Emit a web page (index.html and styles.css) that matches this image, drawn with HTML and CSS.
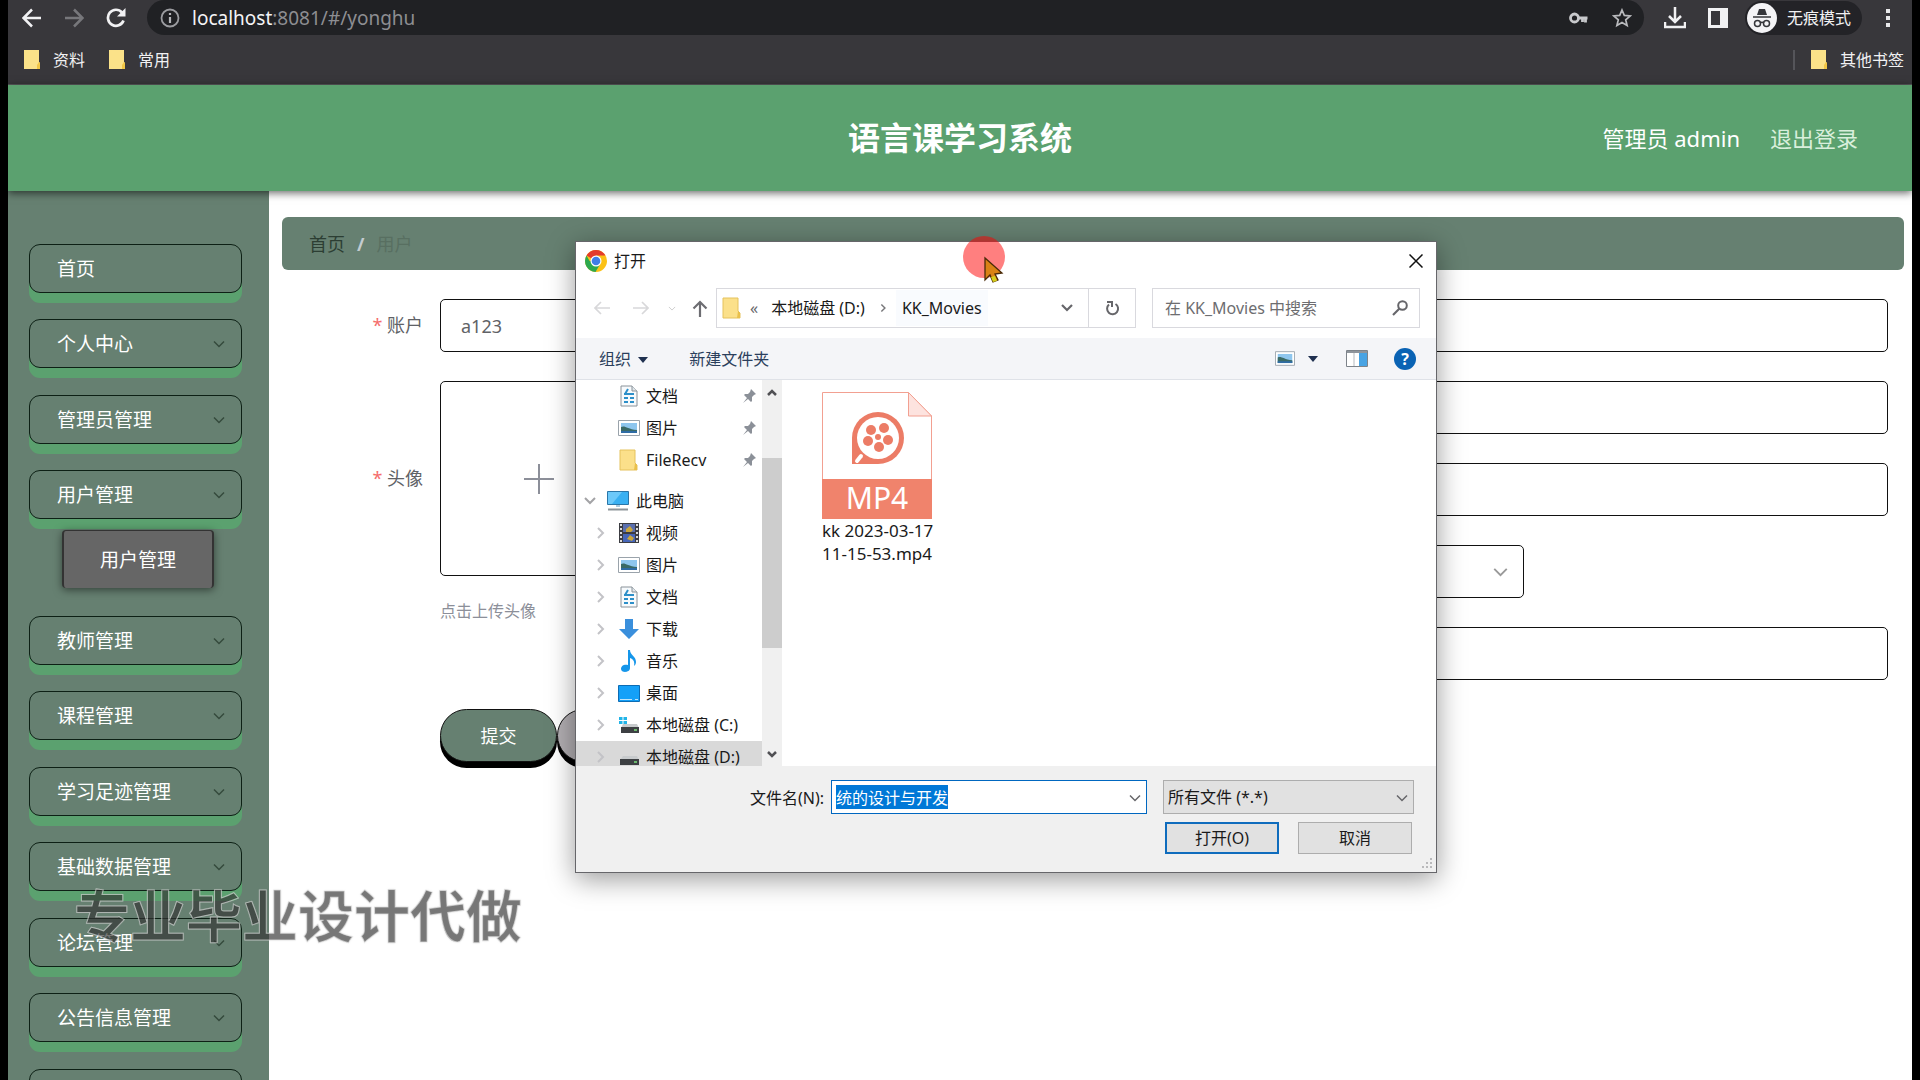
FILE: index.html
```html
<!DOCTYPE html>
<html lang="zh-CN">

<head>
    <meta charset="UTF-8">
    <meta name="viewport" content="width=device-width, initial-scale=1.0">
    <title>语言课学习系统</title>
    <link rel="stylesheet" href="styles.css">
</head>

<body>

    <!-- shared icons -->
    <svg class="sprite" aria-hidden="true">
        <symbol id="i-down" viewBox="0 0 12 8"><path d="M1 1.5l5 5 5-5" fill="none" stroke="currentColor" stroke-width="1.5"/></symbol>
        <symbol id="i-right" viewBox="0 0 8 14"><path d="M1 2l5 5-5 5" fill="none" stroke="currentColor" stroke-width="2"/></symbol>
        <symbol id="i-bookmark" viewBox="0 0 18 20"><path d="M1 0h15v12l1 1v6H1z" fill="#fbe289"/><path d="M14 19v-4l2-3 1 1v6z" fill="#f1c645"/></symbol>
        <symbol id="i-folder" viewBox="0 0 20 22"><path d="M1 1h15v13l2 2v5H1z" fill="#fbe08a" stroke="#e5c25d"/><path d="M15 21l1-7 2 2v5z" fill="#e9c04c"/></symbol>
        <symbol id="i-doc" viewBox="0 0 20 22"><path d="M2 1h11l5 5v15H2z" fill="#f7fafc" stroke="#8a9299"/><path d="M13 1v5h5" fill="#dfe6ea" stroke="#8a9299"/><path d="M9 4l-3 5M5 9h10M5 13h4M11 13h4M5 17h4M11 17h4" stroke="#2c8fc9" stroke-width="2"/></symbol>
        <symbol id="i-pic" viewBox="0 0 22 16"><path d="M.5.5h21v15H.5z" fill="#fff" stroke="#9aa3ab"/><path d="M3 3h16v10H3z" fill="#8ec6ee"/><path d="M3 7c4-2 6 2 16 3v3H3z" fill="#3a6a66"/><path d="M3 11h16v2H3z" fill="#2f6ca5"/></symbol>
        <symbol id="i-pin" viewBox="0 0 14 14"><path d="M9 0l5 5-2 1-2 2v4l-1 1-3-3-5 4 4-5-3-3 1-1h3l2-2z" fill="#8b9098"/></symbol>
        <symbol id="i-pc" viewBox="0 0 22 20"><path d="M.5.5h21v13H.5z" fill="#39b0f2" stroke="#2a76a8"/><path d="M1 1h14L5 13H1z" fill="#6cc9fa"/><path d="M9 14h4v2H9z" fill="#a9cbe0"/><path d="M1 18.5h20" stroke="#8d9499" stroke-width="2"/></symbol>
        <symbol id="i-video" viewBox="0 0 20 20"><path d="M0 0h20v20H0z" fill="#3c3d42"/><path d="M4 1h12v8H4z" fill="#5a6fae"/><path d="M4 11h12v8H4z" fill="#4666b8"/><path d="M7 6l4-3 3 4-2 2H7zM8 16l3-4 4 3-2 3z" fill="#c9a63c"/><path d="M2 1v18M18 1v18" stroke="#dcdcdc" stroke-width="2" stroke-dasharray="2 2"/></symbol>
        <symbol id="i-load" viewBox="0 0 20 20"><path d="M6 0h8v10h6L10 20 0 10h6z" fill="#3a8fdc"/></symbol>
        <symbol id="i-music" viewBox="0 0 16 22"><path d="M7 0h2c0 5 6 6 6 12 0 2-1 3-2 4 1-5-1-7-4-8v10c0 5-9 5-9 1 0-4 4-5 7-4z" fill="#1596ea"/></symbol>
        <symbol id="i-desk" viewBox="0 0 22 17"><path d="M.5.5h21v16H.5z" fill="#14a0f8" stroke="#0c6cb4"/><path d="M2 14.5h12M17 14.5h3" stroke="#bfe4fb"/></symbol>
        <symbol id="i-disk" viewBox="0 0 20 18"><path d="M4 8h14l2 4H1z" fill="#c8cbcd"/><path d="M1 11h19v6H1z" fill="#3d4043"/><path d="M15 14h3" stroke="#7be07b" stroke-width="1.5"/></symbol>
        <symbol id="i-sysdisk" viewBox="0 0 20 18"><path d="M4 8h14l2 4H2z" fill="#c8cbcd"/><path d="M2 11h18v6H2z" fill="#3d4043"/><path d="M15 14h3" stroke="#7be07b" stroke-width="1.5"/><path d="M0 1h3.500v3H0zM4.500 1H8v3H4.500zM0 5h3.500v3H0zM4.500 5H8v3H4.500z" fill="#21b4e8"/></symbol>
    </svg>

    <header class="browser">
        <div class="browser-nav">
            <button class="nav-btn" aria-label="后退"><svg width="20" height="20" viewBox="0 0 20 20"><path d="M19 10H2M10 1.5L1.5 10l8.500 8.500" fill="none" stroke="#f1f1f3" stroke-width="2.5"/></svg></button>
            <button class="nav-btn" aria-label="前进"><svg width="20" height="20" viewBox="0 0 20 20"><path d="M1 10h17M10 1.5l8.500 8.500-8.500 8.500" fill="none" stroke="#77777b" stroke-width="2.5"/></svg></button>
            <button class="nav-btn" aria-label="刷新"><svg width="20" height="20" viewBox="0 0 20 20"><path d="M17.500 12.500A8 8 0 1 1 16 4.500" fill="none" stroke="#f1f1f3" stroke-width="2.7"/><path d="M19.500 0v8.500H11z" fill="#f1f1f3"/></svg></button>
            <div class="url-bar">
                <svg width="20" height="20" viewBox="0 0 20 20"><circle cx="10" cy="10" r="8.5" fill="none" stroke="#9b9ca0" stroke-width="1.8"/><path d="M10 9v6M10 5v2" stroke="#b5b6ba" stroke-width="2.2"/></svg>
                <span class="url"><b>localhost</b>:8081/#/yonghu</span>
                <svg width="19" height="12" viewBox="0 0 19 12"><circle cx="5.5" cy="6" r="4" fill="none" stroke="#c8c9cc" stroke-width="2.8"/><path d="M9 6h9.500M16.500 6v4.500M13.500 6v4" stroke="#c8c9cc" stroke-width="2.8"/></svg>
                <svg width="20" height="20" viewBox="0 0 20 20"><path d="M10 2l2.300 5.400 5.900.5-4.500 3.900 1.400 5.700-5.100-3-5.100 3 1.400-5.700L1.800 7.900l5.900-.5z" fill="none" stroke="#b9babd" stroke-width="1.7"/></svg>
            </div>
            <button class="tool-btn" aria-label="下载"><svg width="22" height="22" viewBox="0 0 22 22"><path d="M11 0v14M5 9l6 6 6-6M1 15v5h20v-5" fill="none" stroke="#f1f1f3" stroke-width="2.5"/></svg></button>
            <button class="tool-btn" aria-label="侧边栏"><svg width="20" height="20" viewBox="0 0 20 20"><path d="M0 0h20v20H0zM3 3v14h9V3z" fill="#f1f1f3" fill-rule="evenodd"/></svg></button>
            <div class="incognito">
                <svg width="30" height="30" viewBox="0 0 30 30"><circle cx="15" cy="15" r="15" fill="#f4f4f6"/><path d="M10 12l2-6h6l2 6z" fill="#35363a"/><path d="M6 14h18M13 20q2-1.500 4 0" fill="none" stroke="#35363a" stroke-width="1.7"/><circle cx="10.5" cy="20.5" r="3" fill="none" stroke="#35363a" stroke-width="1.5"/><circle cx="19.5" cy="20.5" r="3" fill="none" stroke="#35363a" stroke-width="1.5"/></svg>
                <span>无痕模式</span>
            </div>
            <button class="tool-btn" aria-label="菜单"><svg width="4" height="18" viewBox="0 0 4 18"><path d="M0 0h4v4H0zM0 7h4v4H0zM0 14h4v4H0z" fill="#e8e8ea"/></svg></button>
        </div>
        <nav class="bookmarks">
            <a href="#"><svg width="18" height="20"><use href="#i-bookmark"/></svg>资料</a>
            <a href="#"><svg width="18" height="20"><use href="#i-bookmark"/></svg>常用</a>
            <a href="#" class="other"><svg width="18" height="20"><use href="#i-bookmark"/></svg>其他书签</a>
        </nav>
    </header>

    <div class="app">
        <header class="top">
            <h1>语言课学习系统</h1>
            <div class="user">
                <span>管理员 admin</span>
                <a href="#">退出登录</a>
            </div>
        </header>

        <div class="main">
            <aside class="sidebar">
                <ul class="menu">
                    <li><button class="menu-item">首页</button></li>
                    <li><button class="menu-item">个人中心<svg width="12" height="8"><use href="#i-down"/></svg></button></li>
                    <li><button class="menu-item">管理员管理<svg width="12" height="8"><use href="#i-down"/></svg></button></li>
                    <li>
                        <button class="menu-item">用户管理<svg width="12" height="8"><use href="#i-down"/></svg></button>
                        <a href="#/yonghu" class="submenu-item">用户管理</a>
                    </li>
                    <li><button class="menu-item">教师管理<svg width="12" height="8"><use href="#i-down"/></svg></button></li>
                    <li><button class="menu-item">课程管理<svg width="12" height="8"><use href="#i-down"/></svg></button></li>
                    <li><button class="menu-item">学习足迹管理<svg width="12" height="8"><use href="#i-down"/></svg></button></li>
                    <li><button class="menu-item">基础数据管理<svg width="12" height="8"><use href="#i-down"/></svg></button></li>
                    <li><button class="menu-item">论坛管理<svg width="12" height="8"><use href="#i-down"/></svg></button></li>
                    <li><button class="menu-item">公告信息管理<svg width="12" height="8"><use href="#i-down"/></svg></button></li>
                    <li><button class="menu-item" aria-label="更多"></button></li>
                </ul>
            </aside>

            <main class="content">
                <nav class="breadcrumb">
                    <a href="#/">首页</a>
                    <b>/</b>
                    <span>用户</span>
                </nav>

                <form class="user-form">
                    <div class="form-cols">
                        <div class="form-col">
                            <div class="form-item">
                                <label for="account"><i>*</i> 账户</label>
                                <input id="account" class="field" type="text" value="a123">
                            </div>
                            <div class="form-item">
                                <label for="avatar" class="avatar-label"><i>*</i> 头像</label>
                                <div>
                                    <button type="button" id="avatar" class="upload"><svg width="30" height="30" viewBox="0 0 30 30"><path d="M15 0v30M0 15h30" stroke="#8c8f99" stroke-width="2"/></svg></button>
                                    <p class="hint">点击上传头像</p>
                                </div>
                            </div>
                        </div>
                        <div class="form-col">
                            <div class="form-item"><input class="field" type="text" aria-label="姓名"></div>
                            <div class="form-item"><input class="field" type="text" aria-label="手机号"></div>
                            <div class="form-item"><input class="field" type="text" aria-label="身份证号"></div>
                            <div class="form-item">
                                <div class="select-wrap">
                                    <select class="field" aria-label="性别"><option></option></select>
                                    <svg width="15" height="10"><use href="#i-down"/></svg>
                                </div>
                            </div>
                            <div class="form-item"><input class="field" type="text" aria-label="邮箱"></div>
                        </div>
                    </div>
                    <div class="form-actions">
                        <button type="button" class="btn btn-submit">提交</button>
                        <button type="button" class="btn" aria-label="取消"></button>
                    </div>
                </form>
            </main>
        </div>
    </div>

    <section class="dialog" role="dialog" aria-label="打开">
        <div class="dialog-title">
            <svg width="22" height="22" viewBox="0 0 22 22"><circle cx="11" cy="11" r="11" fill="#fbc116"/><path d="M11 11L1.500 5.500A11 11 0 0 1 20.500 5.500H11z" fill="#e33b2e"/><path d="M1.500 5.500A11 11 0 0 0 10.500 22l5-8.500L11 11H4.600z" fill="#2da94f"/><circle cx="11" cy="11" r="5.5" fill="#fff"/><circle cx="11" cy="11" r="4.3" fill="#3f7ee8"/></svg>
            <span>打开</span>
            <button aria-label="关闭"><svg width="14" height="14" viewBox="0 0 14 14"><path d="M.5.5l13 13M13.500.5l-13 13" stroke="#111" stroke-width="1.5"/></svg></button>
        </div>

        <div class="dialog-nav">
            <button class="go" aria-label="后退"><svg width="16" height="14" viewBox="0 0 16 14"><path d="M16 7H1M7 1L1 7l6 6" fill="none" stroke="#d8d8da" stroke-width="1.7"/></svg></button>
            <button class="go" aria-label="前进"><svg width="16" height="14" viewBox="0 0 16 14"><path d="M0 7h15M9 1l6 6-6 6" fill="none" stroke="#d8d8da" stroke-width="1.7"/></svg></button>
            <button class="go go-small" aria-label="最近位置"><svg class="faint" width="8" height="5"><use href="#i-down"/></svg></button>
            <button class="go go-up" aria-label="上移"><svg width="16" height="17" viewBox="0 0 16 17"><path d="M8 17V2M1.500 8.500L8 2l6.500 6.500" fill="none" stroke="#6d6d72" stroke-width="2.2"/></svg></button>
            <div class="address">
                <svg width="20" height="22"><use href="#i-folder"/></svg>
                <span class="laquo">«</span>
                <span>本地磁盘 (D:)</span>
                <svg class="sep" width="7" height="10"><use href="#i-right"/></svg>
                <span class="current">KK_Movies</span>
                <button class="drop" aria-label="历史"><svg width="12" height="8" viewBox="0 0 12 8"><path d="M1 1l5 5 5-5" fill="none" stroke="#66666a" stroke-width="2.2"/></svg></button>
                <button class="refresh" aria-label="刷新"><svg width="15" height="16" viewBox="0 0 15 16"><path d="M10.500 4A5.500 5.500 0 1 1 4 4.500M2 2h5v5" fill="none" stroke="#66666a" stroke-width="2"/></svg></button>
            </div>
            <div class="search">
                <input type="text" placeholder="在 KK_Movies 中搜索" aria-label="搜索">
                <svg width="16" height="16" viewBox="0 0 16 16"><circle cx="10.5" cy="5.5" r="4.3" fill="none" stroke="#66666a" stroke-width="2"/><path d="M7.500 8.500L1 15" stroke="#66666a" stroke-width="2.2"/></svg>
            </div>
        </div>

        <div class="dialog-tools">
            <button>组织 <i class="caret"></i></button>
            <button class="new-folder">新建文件夹</button>
            <button class="views" aria-label="视图"><svg width="20" height="15"><use href="#i-pic"/></svg><i class="caret"></i></button>
            <button class="pane" aria-label="预览窗格"><svg width="22" height="17" viewBox="0 0 22 17"><path d="M.5.5h21v16H.5z" fill="#fff" stroke="#7d838a"/><path d="M1 1h20v2H1z" fill="#8f959c"/><path d="M8 3v13" stroke="#b6babf"/><path d="M13 3h8v13h-8z" fill="#48a3e3"/></svg></button>
            <button class="help" aria-label="帮助">?</button>
        </div>

        <div class="dialog-body">
            <ul class="tree">
                <li><svg width="20" height="22"><use href="#i-doc"/></svg>文档<svg class="pin" width="14" height="14"><use href="#i-pin"/></svg></li>
                <li><svg width="22" height="16"><use href="#i-pic"/></svg>图片<svg class="pin" width="14" height="14"><use href="#i-pin"/></svg></li>
                <li><svg width="20" height="22"><use href="#i-folder"/></svg>FileRecv<svg class="pin" width="14" height="14"><use href="#i-pin"/></svg></li>
                <li class="root"><svg class="open" width="12" height="8" viewBox="0 0 12 8"><path d="M1 1l5 5 5-5" fill="none" stroke="#a3a3a6" stroke-width="2"/></svg><svg width="22" height="20"><use href="#i-pc"/></svg>此电脑</li>
                <li><svg class="fold" width="8" height="14"><use href="#i-right"/></svg><svg width="20" height="20"><use href="#i-video"/></svg>视频</li>
                <li><svg class="fold" width="8" height="14"><use href="#i-right"/></svg><svg width="22" height="16"><use href="#i-pic"/></svg>图片</li>
                <li><svg class="fold" width="8" height="14"><use href="#i-right"/></svg><svg width="20" height="22"><use href="#i-doc"/></svg>文档</li>
                <li><svg class="fold" width="8" height="14"><use href="#i-right"/></svg><svg width="20" height="20"><use href="#i-load"/></svg>下载</li>
                <li><svg class="fold" width="8" height="14"><use href="#i-right"/></svg><svg width="16" height="22"><use href="#i-music"/></svg>音乐</li>
                <li><svg class="fold" width="8" height="14"><use href="#i-right"/></svg><svg width="22" height="17"><use href="#i-desk"/></svg>桌面</li>
                <li><svg class="fold" width="8" height="14"><use href="#i-right"/></svg><svg width="20" height="18"><use href="#i-sysdisk"/></svg>本地磁盘 (C:)</li>
                <li class="selected"><svg class="fold" width="8" height="14"><use href="#i-right"/></svg><svg width="20" height="18"><use href="#i-disk"/></svg>本地磁盘 (D:)</li>
            </ul>
            <div class="scrollbar">
                <svg width="10" height="7" viewBox="0 0 10 7"><path d="M1 6l4-4 4 4" fill="none" stroke="#505054" stroke-width="2.5"/></svg>
                <div class="thumb"></div>
                <svg width="10" height="7" viewBox="0 0 10 7"><path d="M1 1l4 4 4-4" fill="none" stroke="#505054" stroke-width="2.5"/></svg>
            </div>
            <div class="files">
                <figure class="file">
                    <svg width="110" height="127" viewBox="0 0 110 127">
                        <path d="M.5 126V.5h86L109.500 24v102z" fill="#fff" stroke="#f2a091"/>
                        <path d="M86.500.5V24h23z" fill="#fde3df" stroke="#f2a091"/>
                        <path d="M0 87h110v40H0z" fill="#f0836c"/>
                        <path d="M30 72V46a26 26 0 1 1 26 26z" fill="#ec7c66"/>
                        <circle cx="56" cy="46" r="21" fill="#fff"/>
                        <g fill="#ec7c66"><circle cx="49" cy="38" r="5"/><circle cx="62" cy="36" r="5"/><circle cx="66" cy="48" r="5"/><circle cx="57" cy="55" r="5"/><circle cx="46" cy="49" r="5"/><circle cx="56" cy="45" r="3"/></g>
                        <path d="M35 69l4-5" stroke="#fff" stroke-width="4" stroke-linecap="round"/>
                        <text x="55" y="117" text-anchor="middle" class="file-type">MP4</text>
                    </svg>
                    <figcaption>kk 2023-03-17<br>11-15-53.mp4</figcaption>
                </figure>
            </div>
        </div>

        <div class="dialog-foot">
            <label for="filename">文件名(N):</label>
            <div class="combo name">
                <input id="filename" type="text" value="统的设计与开发">
                <svg width="12" height="8"><use href="#i-down"/></svg>
            </div>
            <div class="combo type">
                <select aria-label="文件类型"><option>所有文件 (*.*)</option></select>
                <svg width="12" height="8"><use href="#i-down"/></svg>
            </div>
            <div class="foot-actions">
                <button class="primary">打开(O)</button>
                <button>取消</button>
            </div>
            <svg class="grip" width="12" height="12" viewBox="0 0 12 12"><path d="M9 0h2v2H9zM9 4h2v2H9zM5 4h2v2H5zM9 8h2v2H9zM5 8h2v2H5zM1 8h2v2H1z" fill="#b9b9bb"/></svg>
        </div>
    </section>

    <svg class="pointer" width="44" height="50" viewBox="0 0 44 50" aria-hidden="true">
        <circle cx="21" cy="21" r="21" fill="#ff0000" fill-opacity=".5"/>
        <path d="M22 22v22l5-5 3 7 5-2-3-6 7-1z" fill="#d98216" stroke="#4a2a08" stroke-width="1.3"/>
        <path d="M28 41l2 5 4-1-2-5z" fill="#d6cf1c"/>
    </svg>

    <div class="watermark">专业毕业设计代做</div>

    <script>
        const filename = document.getElementById('filename');
        filename.focus();
        filename.select();
    </script>

</body>

</html>
```
FILE: styles.css
```css
* {
    box-sizing: border-box;
}

body {
    margin: 0;
    padding: 0 8px;
    height: 100vh;
    display: flex;
    flex-direction: column;
    position: relative;
    overflow: hidden;
    background-color: #000;
    font-family: "Noto Sans", "Noto Sans CJK SC", sans-serif;
    font-size: 16px;
    line-height: 24px;
}

button,
input,
select {
    font: inherit;
    color: inherit;
    margin: 0;
    padding: 0;
    border: none;
    background: none;
    outline: none;
    appearance: none;
}

a {
    color: inherit;
    text-decoration: none;
}

ul {
    list-style: none;
    margin: 0;
    padding: 0;
}

svg {
    display: block;
    flex-shrink: 0;
}

.sprite {
    position: absolute;
    width: 0;
    height: 0;
}

/* browser bar */
.browser {
    background-color: #38373b;
    border-bottom: 1px solid #59595c;
    color: #f1f1f3;
}

.browser-nav {
    display: flex;
    align-items: center;
    height: 35px;
    padding: 0 22px 0 3px;
}

.nav-btn {
    width: 42px;
    height: 34px;
    display: grid;
    place-items: center;
}

.url-bar {
    flex: 1;
    display: flex;
    align-items: center;
    height: 35px;
    margin-left: 10px;
    margin-right: 20px;
    padding: 0 12px 0 13px;
    border-radius: 18px;
    background-color: #202124;
    gap: 24px;
}

.url {
    flex: 1;
    margin-left: -12px;
    font-size: 19px;
    color: #8d8e92;
}

.url b {
    font-weight: normal;
    color: #f4f4f6;
}

.tool-btn {
    margin-right: 22px;
}

.tool-btn:last-child {
    margin-right: 0;
}

.incognito {
    display: flex;
    align-items: center;
    gap: 10px;
    height: 34px;
    margin-left: -5px;
    margin-right: 24px;
    padding: 0 11px 0 2px;
    border-radius: 17px;
    background-color: #232327;
}

.bookmarks {
    display: flex;
    gap: 23px;
    height: 49px;
    padding: 0 8px 0 15px;
    align-items: center;
}

.bookmarks a {
    display: flex;
    align-items: center;
    gap: 12px;
}

.bookmarks .other {
    margin-left: auto;
    padding-left: 15px;
    border-left: 2px solid #55555a;
    line-height: 20px;
}

/* app header */
.app {
    flex: 1;
    display: flex;
    flex-direction: column;
    background-color: #fff;
    min-height: 0;
}

.top {
    height: 106px;
    display: grid;
    grid-template-columns: 1fr auto 1fr;
    align-items: center;
    padding: 0 54px;
    background-color: #5ba16f;
    color: #fff;
    box-shadow: 0 2px 8px rgba(0, 0, 0, 0.6);
    z-index: 1;
}

.top h1 {
    grid-column: 2;
    margin: 0;
    font-size: 32px;
    line-height: 40px;
}

.user {
    display: flex;
    justify-content: flex-end;
    gap: 30px;
    font-size: 22px;
}

.user a {
    color: #d9efdc;
}

.main {
    flex: 1;
    display: flex;
    min-height: 0;
}

/* sidebar */
.sidebar {
    width: 261px;
    padding: 53px 27px 0 21px;
    background-color: #668071;
    overflow: hidden;
}

.menu {
    display: grid;
    grid-template-rows: 75px 76px 75px 146px;
    grid-auto-rows: 75px 76px;
    font-size: 19px;
    color: #fff;
}

.menu-item {
    display: flex;
    align-items: center;
    justify-content: space-between;
    width: 100%;
    height: 49px;
    padding: 0 16px 0 27px;
    border: 1px solid #0d2015;
    border-radius: 11px;
    background-color: #668071;
    box-shadow: 0 10px 0 #5ba16f;
}

.menu-item svg {
    color: #354a3d;
}

.submenu-item {
    display: block;
    width: 152px;
    height: 58px;
    margin: 11px 0 0 33px;
    border: 1px solid #333;
    border-width: 1px 2px 0;
    border-radius: 4px;
    background-color: #666;
    box-shadow: 0 2px 8px rgba(0, 0, 0, 0.5);
    line-height: 58px;
    text-align: center;
}

/* content */
.content {
    flex: 1;
    padding: 26px 8px 0 13px;
}

.breadcrumb {
    display: flex;
    align-items: center;
    gap: 12px;
    height: 53px;
    padding: 0 27px;
    border-radius: 6px;
    background-color: #668071;
    font-size: 18px;
    color: #2c3e33;
}

.breadcrumb b {
    color: #c3ccd0;
}

.breadcrumb span {
    color: #586f61;
}

.user-form {
    padding: 29px 16px 0 0;
    font-size: 18px;
    color: #606266;
}

.form-cols {
    display: grid;
    grid-template-columns: 1fr 1fr;
}

.form-col {
    display: flex;
    flex-direction: column;
    gap: 29px;
}

.form-item {
    display: grid;
    grid-template-columns: 158px 1fr;
}

.form-item > :only-child {
    grid-column: 2;
}

.form-item label {
    padding-right: 17px;
    text-align: right;
    line-height: 53px;
}

.form-item .avatar-label {
    line-height: 195px;
}

.form-item i {
    font-style: normal;
    color: #f56c6c;
}

.field {
    width: 100%;
    height: 53px;
    padding: 0 20px;
    border: 1px solid #111;
    border-radius: 5px;
    background-color: #fff;
}

.select-wrap {
    position: relative;
    width: 281px;
}

.select-wrap svg {
    position: absolute;
    right: 16px;
    top: 22px;
    color: #999;
}

.upload {
    display: grid;
    place-items: center;
    width: 197px;
    height: 195px;
    border: 1px solid #111;
    border-radius: 5px;
}

.hint {
    margin: 23px 0 0;
    font-size: 16px;
    color: #8c8f99;
}

.form-actions {
    display: flex;
    padding: 29px 0 0 158px;
}

.btn {
    width: 117px;
    height: 53px;
    border: 1px solid #111;
    border-radius: 30px;
    background-color: #b2aeb2;
    box-shadow: 0 6px 0 #000;
}

.btn-submit {
    background-color: #668071;
    color: #fff;
}

/* file dialog */
.dialog {
    position: absolute;
    left: 575px;
    top: 241px;
    width: 862px;
    display: flex;
    flex-direction: column;
    border: 1px solid #66666a;
    background-color: #fff;
    box-shadow: 0 6px 26px rgba(0, 0, 0, 0.4);
    color: #1a1a1a;
    z-index: 2;
}

.dialog-title {
    display: flex;
    align-items: center;
    gap: 7px;
    height: 37px;
    padding: 0 13px 0 9px;
}

.dialog-title button {
    margin-left: auto;
}

.dialog-nav {
    display: flex;
    height: 59px;
    padding: 9px 16px 10px 6px;
}

.go {
    width: 39px;
    display: grid;
    place-items: center;
}

.go-small {
    width: 24px;
}

.go-up {
    width: 32px;
}

.faint {
    color: #ccc;
}

.address {
    flex: 1;
    display: flex;
    align-items: center;
    padding-left: 5px;
    border: 1px solid #d9d9de;
}

.laquo {
    margin: 0 13px 0 8px;
    color: #66666a;
}

.sep {
    margin: 0 9px 0 15px;
    color: #77777a;
}

.current {
    padding: 6px;
    background-color: #f9fbfe;
}

.drop {
    margin-left: auto;
    margin-right: 15px;
}

.refresh {
    display: grid;
    place-items: center;
    width: 47px;
    height: 100%;
    border-left: 1px solid #d9d9de;
}

.search {
    display: flex;
    align-items: center;
    width: 268px;
    margin-left: 16px;
    padding: 0 11px 0 12px;
    border: 1px solid #d9d9de;
}

.search input {
    flex: 1;
    min-width: 0;
}

.search input::placeholder {
    color: #6d6d70;
}

.dialog-tools {
    display: flex;
    align-items: center;
    height: 42px;
    padding: 0 20px 0 23px;
    background-color: #f4f5f8;
    border-bottom: 1px solid #dfe2e8;
    color: #2b3f5c;
}

.caret {
    display: inline-block;
    margin-left: 3px;
    border: 5px solid transparent;
    border-top: 6px solid #1f3050;
    border-bottom: none;
    vertical-align: middle;
}

.new-folder {
    margin-left: 41px;
}

.views {
    display: flex;
    align-items: center;
    gap: 10px;
    margin-left: auto;
}

.pane {
    margin: 0 26px 0 28px;
}

.help {
    width: 22px;
    height: 22px;
    border-radius: 50%;
    background-color: #0a63b4;
    color: #fff;
    font-weight: bold;
    line-height: 22px;
}

.dialog-body {
    display: grid;
    grid-template-columns: 186px 20px 1fr;
    height: 386px;
    overflow: hidden;
}

.tree {
    height: 386px;
    overflow: hidden;
}

.tree li {
    display: flex;
    align-items: center;
    height: 32px;
    padding-left: 70px;
    position: relative;
    white-space: nowrap;
}

/* icons are centred on the indent guide of their level */
.tree svg {
    position: absolute;
    left: 53px;
    transform: translateX(-50%);
}

.tree .pin {
    left: 173px;
}

.tree .fold {
    left: 25px;
    color: #c3c3c7;
}

.tree .root {
    margin-top: 9px;
    padding-left: 60px;
}

.tree .root svg {
    left: 42px;
}

.tree .root .open {
    left: 14px;
}

.tree .selected {
    background-color: #d9d9d9;
}

.scrollbar {
    display: flex;
    flex-direction: column;
    align-items: center;
    padding: 9px 0 8px;
    background-color: #f0f0f0;
}

.thumb {
    width: 20px;
    height: 190px;
    margin-top: 62px;
    margin-bottom: auto;
    background-color: #cdcdcd;
}

.files {
    padding: 12px 40px;
}

.file {
    width: 110px;
    margin: 0;
    font-size: 17px;
    line-height: 23px;
    text-align: center;
    white-space: nowrap;
}

.file-type {
    font-size: 30px;
    fill: #fff;
}

.dialog-foot {
    position: relative;
    display: grid;
    grid-template-columns: 1fr 316px 251px;
    grid-template-rows: 34px 32px;
    column-gap: 16px;
    row-gap: 8px;
    height: 106px;
    padding: 14px 22px 0 0;
    background-color: #f0f0f0;
}

.dialog-foot label {
    margin-right: -9px;
    text-align: right;
    line-height: 36px;
}

.combo {
    position: relative;
}

.combo input,
.combo select {
    width: 100%;
    height: 100%;
    padding: 0 4px;
    border: 1px solid #adadad;
    background-color: #e1e1e1;
}

.combo input {
    padding: 0 30px 0 4px;
    border: 1px solid #0067c0;
    background-color: #fff;
}

.combo input::selection {
    background-color: #0078d7;
    color: #fff;
}

.combo svg {
    position: absolute;
    right: 6px;
    top: 14px;
    color: #66666a;
}

.foot-actions {
    grid-column: 3;
    display: grid;
    grid-template-columns: 114px 114px;
    justify-content: center;
    gap: 19px;
}

.foot-actions button {
    border: 1px solid #adadad;
    background-color: #e1e1e1;
}

.foot-actions .primary {
    border: 2px solid #0f6cbd;
}

.grip {
    position: absolute;
    right: 3px;
    bottom: 2px;
}

/* mouse pointer with its highlight */
.pointer {
    position: absolute;
    left: 963px;
    top: 236px;
    z-index: 3;
}

.watermark {
    position: absolute;
    left: 74px;
    top: 875px;
    z-index: 3;
    font-size: 56px;
    font-weight: bold;
    line-height: 80px;
    color: rgba(0, 0, 0, 0.45);
    -webkit-text-stroke: 1px rgba(230, 230, 230, 0.6);
    text-shadow: 0 0 2px rgba(160, 160, 160, 0.4);
}
```
